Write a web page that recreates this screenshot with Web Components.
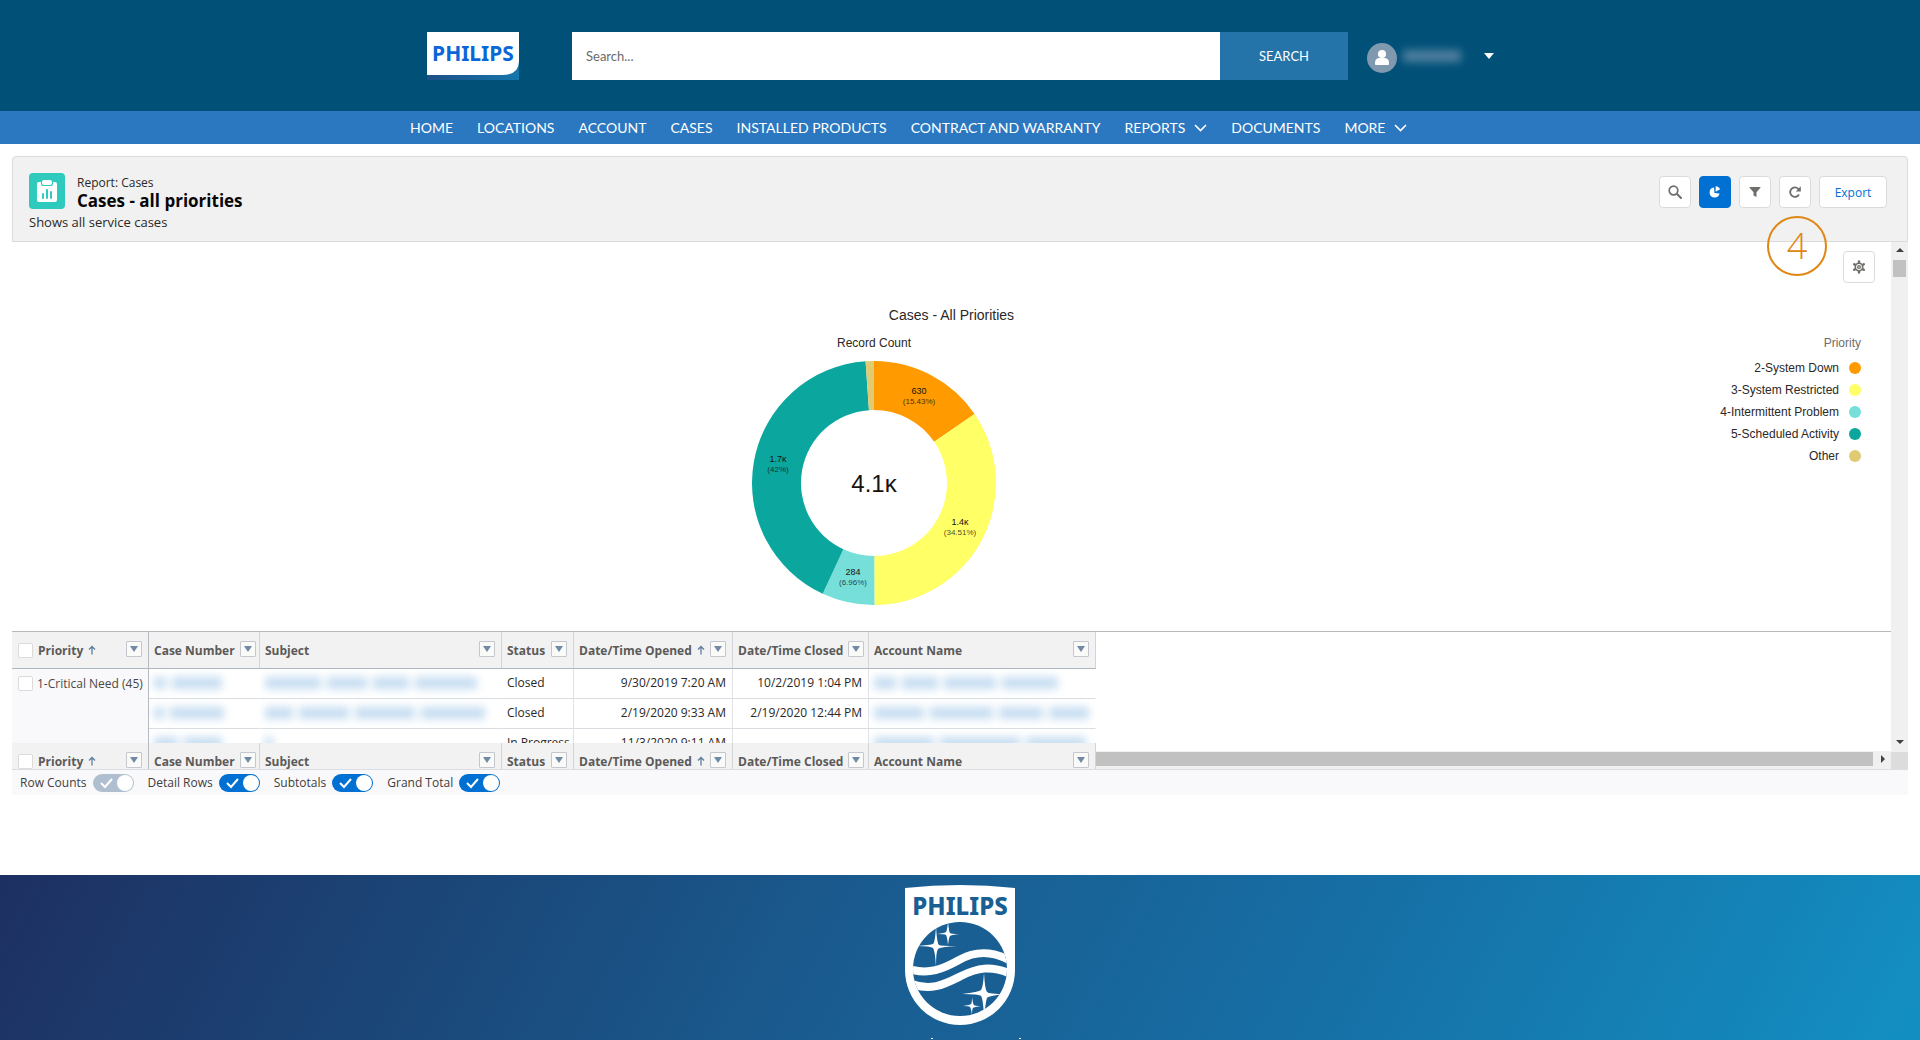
<!DOCTYPE html>
<html lang="en">
<head>
<meta charset="utf-8">
<title>Cases - all priorities</title>
<style>
  html, body {
    margin: 0;
    height: 100%;
  }
  body {
    background: #fff;
    font-family: "Open Sans", "Noto Sans", sans-serif;
    font-size: 12px;
    color: #2b2826;
    overflow: hidden;
  }
</style>
</head>
<body>
<portal-page></portal-page>

<script>
// Styles shared by every component.
const base = `
  *, *::before, *::after { box-sizing: border-box; }
  button, input { font: inherit; color: inherit; margin: 0; padding: 0; }
  button { cursor: pointer; }
  a { color: inherit; text-decoration: none; }
  svg { display: block; flex: none; }
`

/**
 * Registers an element whose shadow root is cloned from a template.
 *
 * @param {string} name - The tag name.
 * @param {string} css - The styles of the element.
 * @param {string|Function} html - The markup, or a function of the host that returns it.
 */
function define (name, css, html) {
  customElements.define(name, class extends HTMLElement {
    constructor () {
      super()
      this.attachShadow({ mode: 'open' })
    }

    connectedCallback () {
      const template = document.createElement('template')
      template.innerHTML = `<style>${base}${css}</style>` + (typeof html === 'function' ? html(this) : html)
      this.shadowRoot.replaceChildren(template.content.cloneNode(true))
    }
  })
}

// Unreadable value, drawn as a smudge.
define('masked-text', `
  :host { display: block; height: 12px; filter: blur(4px); }
  div { display: flex; gap: 6px; height: 100%; }
  span { background: var(--mask-color, #c6ddf1); }
`, host => `<div aria-hidden="true">${host.getAttribute('widths').split(' ').map(w => `<span style="width:${w}px"></span>`).join('')}</div>`)

define('philips-logo', `
  :host { display: block; }
`, `
  <svg width="92" height="48" viewBox="0 0 92 48" role="img" aria-label="Philips">
    <defs><linearGradient id="g"><stop stop-color="#1d4f86"/><stop offset="1" stop-color="#1576ab"/></linearGradient></defs>
    <rect width="92" height="48" fill="url(#g)"/>
    <path d="M0 0h92v29q0 14-17 14H0z" fill="#fff"/>
    <text x="46" y="29" text-anchor="middle" font-family="Noto Sans" font-weight="700" font-size="21" fill="#0b66d8">PHILIPS</text>
  </svg>
`)

define('site-header', `
  :host { display: block; background: #005078; font-family: Lato, sans-serif; }
  .inner { display: flex; align-items: center; max-width: 1110px; margin: 0 auto; padding: 32px 21px 31px 22px; }
  form { display: flex; flex: 1; margin-left: 53px; height: 48px; }
  input { flex: 1; min-width: 0; border: 0; padding: 0 14px; background: #fff; font-size: 13px; }
  input::placeholder { color: #6b6b6b; opacity: 1; }
  form button { width: 128px; border: 0; background: #2574a9; color: #fff; font-size: 13px; }
  .user { display: flex; align-items: center; border: 0; background: none; margin-left: 19px; }
  masked-text { width: 67px; margin: 0 14px 0 6px; --mask-color: #4f7f9f; }
`, `
  <div class="inner">
    <philips-logo></philips-logo>
    <form>
      <input type="search" placeholder="Search..." aria-label="Search">
      <button type="button">SEARCH</button>
    </form>
    <button class="user" type="button" aria-label="User menu">
      <svg width="30" height="34" viewBox="0 0 30 34"><circle cx="15" cy="19" r="15" fill="#8199af"/><circle cx="15" cy="15" r="4" fill="#fff"/><path d="M8 25v-1q0-5 5-5h4q5 0 5 5v1q0 1-1 1H9q-1 0-1-1z" fill="#fff"/></svg>
      <masked-text widths="58"></masked-text>
      <svg width="10" height="6" viewBox="0 0 10 6"><path d="M0 0h10L5 6z" fill="#fff"/></svg>
    </button>
  </div>
`)

const chevron = '<svg width="13" height="8" viewBox="0 0 13 8"><path d="M1 1l5.500 5.500L12 1" fill="none" stroke="#fff" stroke-width="1.600"/></svg>'

define('site-nav', `
  :host { display: block; background: #2b78c0; font-family: Lato, sans-serif; color: #fff; }
  nav { display: flex; gap: 24px; max-width: 1110px; margin: 0 auto; padding: 0 5px; }
  a { display: flex; align-items: center; gap: 9px; height: 33px; font-size: 14px; white-space: nowrap; }
`, () => {
  const items = ['HOME', 'LOCATIONS', 'ACCOUNT', 'CASES', 'INSTALLED PRODUCTS', 'CONTRACT AND WARRANTY', 'REPORTS', 'DOCUMENTS', 'MORE']
  return `<nav>${items.map(i => `<a href="#">${i}${i === 'REPORTS' || i === 'MORE' ? chevron : ''}</a>`).join('')}</nav>`
})

const icons = {
  search: '<circle cx="5.500" cy="5.500" r="4.300" fill="none" stroke="#706e6b" stroke-width="1.700"/><path d="M9 9l4 4" stroke="#706e6b" stroke-width="2" stroke-linecap="round"/>',
  chart: '<path d="M6 2.500A5 5 0 1 0 11.500 8.500L6.500 8z" fill="#fff"/><path d="M7.600 1.300v5.400l4.500-2.500A5 5 0 0 0 7.600 1.300z" fill="#fff"/>',
  filter: '<path d="M2 2h10q1 0 .4.800L8.500 7.200V12l-3-1.500V7.200L1.600 2.800Q1 2 2 2z" fill="#706e6b"/>',
  refresh: '<path d="M11 9.500A4.700 4.700 0 1 1 10.200 3.800L12 5.500" fill="none" stroke="#706e6b" stroke-width="1.800"/><path d="M12.800 1.200v5.200H7.800z" fill="#706e6b"/>',
  gear: '<g stroke="#706e6b" stroke-width="2.400" stroke-linecap="round"><path d="M7 1.400v11.200M2.200 4.200l9.600 5.600M2.200 9.800l9.600-5.600"/></g><circle cx="7" cy="7" r="3.700" fill="#fff" stroke="#706e6b" stroke-width="1.600"/><circle cx="7" cy="7" r="2" fill="#706e6b"/><circle cx="7" cy="7" r=".7" fill="#fff"/>'
}

define('icon-button', `
  :host { display: block; }
  button { display: grid; place-items: center; width: 32px; height: 32px; background: #fff; border: 1px solid #dddbda; border-radius: 4px; }
  :host([selected]) button { background: #0070d2; border-color: #0070d2; }
`, host => `<button type="button" aria-label="${host.getAttribute('label')}"><svg width="14" height="14" viewBox="0 0 14 14">${icons[host.getAttribute('icon')]}</svg></button>`)

define('report-header', `
  :host { position: relative; display: flex; justify-content: space-between; align-items: flex-start; background: #f1f1f1; border: 1px solid #dddbda; border-radius: 4px 4px 0 0; padding: 16px 20px 9px 16px; }
  .title { display: flex; gap: 12px; }
  .kind { font-size: 12px; line-height: 20px; }
  h1 { margin: 0; font-size: 17px; line-height: 16px; font-weight: 700; color: #080707; }
  p { margin: 3px 0 0; font-size: 13px; line-height: 20px; }
  .actions { display: flex; gap: 8px; padding-top: 3px; }
  .export { width: 68px; height: 32px; border: 1px solid #dddbda; border-radius: 4px; background: #fff; color: #0070d2; font-size: 12px; }
  .step { position: absolute; right: 80px; top: 59px; z-index: 1; display: grid; place-items: center; width: 60px; height: 60px; border: 2px solid #e08614; border-radius: 50%; color: #e08614; font-size: 36px; line-height: 36px; font-weight: 300; }
`, `
  <div>
    <div class="title">
      <svg width="36" height="36" viewBox="0 0 36 36"><rect width="36" height="36" rx="4" fill="#2ecabe"/><path d="M10 9h2v2q0 2 2 2h8q2 0 2-2V9h2q2 0 2 2v16q0 2-2 2H10q-2 0-2-2V11q0-2 2-2z" fill="#fff"/><rect x="13" y="7" width="10" height="5" rx="2" fill="#fff"/><path d="M14 21v4M18 17v8M22 19v6" stroke="#2ecabe" stroke-width="2" stroke-linecap="round"/></svg>
      <div>
        <div class="kind">Report: Cases</div>
        <h1>Cases - all priorities</h1>
      </div>
    </div>
    <p>Shows all service cases</p>
  </div>
  <div class="actions">
    <icon-button icon="search" label="Search"></icon-button>
    <icon-button icon="chart" label="Toggle chart" selected></icon-button>
    <icon-button icon="filter" label="Filters"></icon-button>
    <icon-button icon="refresh" label="Refresh"></icon-button>
    <button class="export" type="button">Export</button>
  </div>
  <span class="step">4</span>
`)

const slices = [
  { name: '2-System Down', percent: 15.43, color: '#ff9a00', count: '630', share: '(15.43%)', x: 167, y: 33 },
  { name: '3-System Restricted', percent: 34.51, color: '#ffff66', count: '1.4ᴋ', share: '(34.51%)', x: 208, y: 164 },
  { name: '4-Intermittent Problem', percent: 6.96, color: '#76dfd9', count: '284', share: '(6.96%)', x: 101, y: 214 },
  { name: '5-Scheduled Activity', percent: 42, color: '#0ba69d', count: '1.7ᴋ', share: '(42%)', x: 26, y: 101 },
  { name: 'Other', percent: 1.1, color: '#e0cb73' }
]

/**
 * Gets the path of one ring segment.
 *
 * @param {number} from - Start, in percent of the turn.
 * @param {number} to - End, in percent of the turn.
 * @returns {string} The path data.
 */
function ringPath (from, to) {
  const point = (r, p) => {
    const a = p / 50 * Math.PI
    return `${(122 + r * Math.sin(a)).toFixed(2)} ${(122 - r * Math.cos(a)).toFixed(2)}`
  }
  return `M${point(122, from)}A122 122 0 0 1 ${point(122, to)}L${point(73, to)}A73 73 0 0 0 ${point(73, from)}z`
}

define('donut-chart', `
  :host { display: block; }
  text { text-anchor: middle; fill: #16130f; }
  .count { font-size: 9px; }
  .share { font-size: 8px; fill-opacity: .8; }
  .total { font-size: 24px; }
`, () => {
  let start = 0
  const rings = slices.map(s => {
    const end = Math.min(start + s.percent, 100)
    const path = `<path d="${ringPath(start, end)}" fill="${s.color}"/>`
    start = end
    return path
  }).join('')
  const labels = slices.filter(s => s.count).map(s => `<text class="count" x="${s.x}" y="${s.y}">${s.count}</text><text class="share" x="${s.x}" y="${s.y + 10}">${s.share}</text>`).join('')
  return `<svg width="244" height="244" viewBox="0 0 244 244" role="img" aria-label="Record count by priority">${rings}${labels}<text class="total" x="122" y="131">4.1ᴋ</text></svg>`
})

define('chart-panel', `
  :host { display: block; padding: 9px 0 26px; font-family: "Liberation Sans", Arial, sans-serif; }
  .tools { display: flex; justify-content: flex-end; padding-right: 16px; }
  h2 { margin: 22px 0 10px; font-size: 14px; line-height: 20px; font-weight: 400; text-align: center; }
  .body { display: flex; align-items: flex-start; }
  .plot { flex: 1; display: flex; flex-direction: column; align-items: center; gap: 10px; padding-left: 16px; line-height: 16px; }
  .legend { padding-right: 30px; width: 171px; text-align: right; white-space: nowrap; }
  .legend h3 { margin: 0 0 6px; font-size: 12px; line-height: 16px; font-weight: 400; color: #706e6b; }
  ul { margin: 0; padding: 0; list-style: none; }
  li { display: flex; align-items: center; justify-content: flex-end; gap: 10px; line-height: 22px; }
  i { flex: none; width: 12px; height: 12px; border-radius: 50%; }
`, () => `
  <div class="tools"><icon-button icon="gear" label="Chart properties"></icon-button></div>
  <h2>Cases - All Priorities</h2>
  <div class="body">
    <div class="plot">
      <div>Record Count</div>
      <donut-chart></donut-chart>
    </div>
    <div class="legend">
      <h3>Priority</h3>
      <ul>${slices.map(s => `<li>${s.name}<i style="background:${s.color}"></i></li>`).join('')}</ul>
    </div>
  </div>
`)

const columns = [
  { title: 'Priority', width: 137, check: true, sorted: true },
  { title: 'Case Number', width: 111 },
  { title: 'Subject', width: 242 },
  { title: 'Status', width: 72 },
  { title: 'Date/Time Opened', width: 159, sorted: true },
  { title: 'Date/Time Closed', width: 136 },
  { title: 'Account Name', width: 227 }
]

const rows = [
  { number: '12 50', subject: '56 40 36 62', status: 'Closed', opened: '9/30/2019 7:20 AM', closed: '10/2/2019 1:04 PM', account: '22 36 52 56' },
  { number: '10 54', subject: '28 50 60 64', status: 'Closed', opened: '2/19/2020 9:33 AM', closed: '2/19/2020 12:44 PM', account: '50 64 44 40' },
  { number: '24 38', subject: '8', status: 'In Progress', opened: '11/3/2020 9:11 AM', closed: '', account: '60 80 60' }
]

const arrow = '<svg width="8" height="10" viewBox="0 0 8 10"><path d="M4 9.500V1.500M1 4.500l3-3 3 3" fill="none" stroke="#5f7f9c" stroke-width="1.300"/></svg>'

// The same header is shown above the rows and pinned below them.
define('case-table', `
  :host { display: block; overflow: hidden; }
  table { border-collapse: separate; border-spacing: 0; table-layout: fixed; width: 1084px; }
  th { height: 37px; padding: 0 6px 0 5px; background: #f2f2f3; border-right: 1px solid #d4d4d8; border-bottom: 1px solid #aeb6bf; font-weight: 700; color: #5c5a58; text-align: left; }
  th:first-child, td[rowspan] { padding-left: 6px; border-right-color: #b5bac1; }
  th div { display: flex; align-items: center; gap: 5px; white-space: nowrap; }
  th label, td label { display: flex; align-items: center; gap: 5px; }
  th button { flex: none; display: grid; place-items: center; width: 16px; height: 16px; margin: 0 0 2px auto; border: 1px solid #c4c8ce; border-radius: 1px; background: #fafaf9; }
  input { flex: none; appearance: none; width: 15px; height: 15px; border: 1px solid #dddbda; border-radius: 2px; background: #fff; }
  td { height: 30px; padding: 0 6px 2px 5px; border-right: 1px solid #e0e2e6; border-bottom: 1px solid #d9dde2; white-space: nowrap; overflow: hidden; }
  td[rowspan] { vertical-align: top; padding-top: 6px; padding-right: 0; background: #f9f9fb; color: #4a4846; }
  td label { gap: 4px; }
  td.date { text-align: right; }
  td.masked { border-right-color: transparent; }
`, host => {
  const head = `<tr>${columns.map(c => {
    const label = c.check ? `<label><input type="checkbox" aria-label="Select all">${c.title}</label>` : c.title
    return `<th scope="col"><div>${label}${c.sorted ? arrow : ''}<button type="button" aria-label="${c.title} menu"><svg width="8" height="6" viewBox="0 0 8 6"><path d="M0 0h8L4 6z" fill="#7089a5"/></svg></button></div></th>`
  }).join('')}</tr>`
  const body = rows.map((r, i) => `<tr>
    ${i === 0 ? `<td rowspan="${rows.length}"><label><input type="checkbox">1-Critical Need (45)</label></td>` : ''}
    <td class="masked"><masked-text widths="${r.number}"></masked-text></td>
    <td class="masked"><masked-text widths="${r.subject}"></masked-text></td>
    <td>${r.status}</td><td class="date">${r.opened}</td><td class="date">${r.closed}</td>
    <td class="masked"><masked-text widths="${r.account}"></masked-text></td>
  </tr>`).join('')
  return `<table><colgroup>${columns.map(c => `<col style="width:${c.width}px">`).join('')}</colgroup>
    <thead>${head}</thead>${host.hasAttribute('head-only') ? '' : `<tbody>${body}</tbody>`}</table>`
})

define('toggle-switch', `
  :host { display: block; }
  label { display: flex; align-items: center; gap: 6px; }
  .track { position: relative; display: flex; }
  input { appearance: none; width: 41px; height: 18px; border-radius: 9px; background: #0070d2; }
  input:disabled { background: #b0bfd0; }
  svg { position: absolute; inset: 0; pointer-events: none; }
`, host => `
  <label><slot></slot><span class="track"><input type="checkbox" role="switch" checked ${host.hasAttribute('disabled') ? 'disabled' : ''}>
  <svg width="41" height="18" viewBox="0 0 41 18"><path d="M8 9l4 4 7-8" fill="none" stroke="#fff" stroke-width="2"/><circle cx="32" cy="9" r="8" fill="#fff"/></svg></span></label>
`)

define('report-pane', `
  :host { display: grid; grid-template-columns: minmax(0, 1fr) 17px; }
  .grid { border-top: 1px solid #b8b8b8; }
  .rows { max-height: 111px; overflow: hidden; }
  .pinned { display: flex; align-items: flex-end; height: 26px; }
  .pinned case-table { height: 26px; }
  .side { display: flex; flex-direction: column; align-items: center; background: #f0f0f0; }
  .side svg { margin: 6px 0 8px; }
  .thumb { width: 13px; height: 17px; background: #c1c1c1; }
  .side .down { margin: auto 0 8px; }
  .corner { width: 17px; height: 17px; background: #dcdcdc; }
  .bottom { flex: 1; display: flex; align-items: center; height: 18px; padding: 0 6px 2px 0; background: #f0f0f0; }
  .bottom div { flex: 1; height: 14px; margin-right: 8px; background: #c1c1c1; }
  footer { grid-column: 1 / -1; display: flex; gap: 14px; height: 26px; padding: 0 8px; align-items: center; background: #f9f9fb; border-top: 1px solid #d8dde6; color: #3e3e3c; }
`, `
  <div>
    <chart-panel></chart-panel>
    <div class="grid">
      <div class="rows"><case-table></case-table></div>
      <div class="pinned">
        <case-table head-only></case-table>
        <div class="bottom"><div></div><svg width="4" height="8" viewBox="0 0 4 8"><path d="M0 0l4 4-4 4z" fill="#404040"/></svg></div>
      </div>
    </div>
  </div>
  <div class="side">
    <svg width="8" height="4" viewBox="0 0 8 4"><path d="M0 4l4-4 4 4z" fill="#404040"/></svg>
    <div class="thumb"></div>
    <svg class="down" width="8" height="4" viewBox="0 0 8 4"><path d="M0 0l4 4 4-4z" fill="#404040"/></svg>
    <div class="corner"></div>
  </div>
  <footer>
    <toggle-switch disabled>Row Counts</toggle-switch>
    <toggle-switch>Detail Rows</toggle-switch>
    <toggle-switch>Subtotals</toggle-switch>
    <toggle-switch>Grand Total</toggle-switch>
  </footer>
`)

// Shield with the stars and waves; the slogan starts just below the fold.
define('site-footer', `
  :host { display: flex; justify-content: center; overflow: hidden; background: linear-gradient(118deg, #1e3062 0%, #1b4577 22%, #1a5c90 45%, #166ea4 68%, #138fc2 100%); padding-top: 10px; }
  svg { overflow: visible; }
`, `
  <svg width="110" height="160" viewBox="0 0 110 160" role="img" aria-label="Philips shield">
    <defs><clipPath id="disc"><circle cx="55" cy="84" r="47"/></clipPath></defs>
    <path d="M0 3Q55-3 110 3V85A55 55 0 0 1 0 85z" fill="#fff"/>
    <text x="55" y="30" text-anchor="middle" font-family="Noto Sans" font-weight="800" font-size="24" fill="#1a5f93">PHILIPS</text>
    <g clip-path="url(#disc)">
      <rect y="35" width="110" height="100" fill="#1a5f93"/>
      <g fill="none" stroke="#fff" stroke-width="8">
        <path d="M4 84C24 90 38 84 54 75S86 65 106 76"/>
        <path d="M4 98C26 107 40 99 56 91S86 80 106 89"/>
      </g>
      <g fill="#fff">
        <path d="M31 41Q32 59 34 60T52 61Q35 62 33 64T31 82Q30 65 28 63T11 61Q26 60 28 59T31 41z"/>
        <path d="M43 37Q44 47 45 48T54 49Q46 50 45 51T43 60Q42 51 41 50T32 49Q40 48 41 47T43 37z"/>
        <path d="M79 88Q80 105 82 107T100 109Q83 111 82 113T79 132Q78 113 76 111T57 109Q74 107 76 105T79 88z"/>
        <path d="M67 112Q68 119 69 120T76 121Q69 122 68 123T67 130Q66 123 65 122T58 121Q65 120 66 119T67 112z"/>
      </g>
    </g>
    <path d="M26 153h2v1h-2zM114 153h2v1h-2z" fill="#fff"/>
  </svg>
`)

define('portal-page', `
  :host { display: flex; flex-direction: column; height: 100vh; }
  main { padding: 12px 12px 80px; }
  site-footer { flex: 1; min-height: 0; }
`, `
  <site-header></site-header>
  <site-nav></site-nav>
  <main>
    <report-header></report-header>
    <report-pane></report-pane>
  </main>
  <site-footer></site-footer>
`)
</script>
</body>
</html>
